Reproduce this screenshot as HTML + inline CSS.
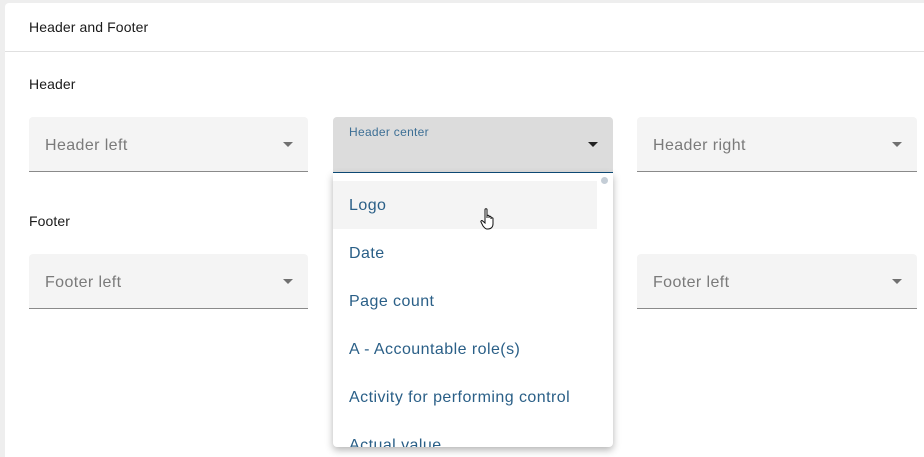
<!DOCTYPE html>
<html style="height:457px;overflow:hidden"><head><style>
body{margin:0;width:924px;height:457px;background:#eeeeee;font-family:"Liberation Sans",sans-serif;overflow:hidden;position:relative}
.card{position:absolute;left:5px;top:3px;width:919px;height:454px;background:#fff;border-radius:4px 0 0 0}
.t{position:absolute;font-size:14px;color:#1a1a1a;letter-spacing:0.1px}
.f{position:absolute;width:279px;height:55px;background:#f4f4f4;border-radius:4px 4px 0 0;border-bottom:1px solid #8a8a8a;box-sizing:border-box}
.f span{position:absolute;left:16px;top:20px;font-size:16px;color:#7a7a7a;letter-spacing:0.4px}
.f i{position:absolute;right:15px;top:25px;width:0;height:0;border-left:5px solid transparent;border-right:5px solid transparent;border-top:5px solid #707070}
.menu{position:absolute;left:333px;top:173px;width:280px;height:274px;background:#fff;box-shadow:0 3px 8px rgba(0,0,0,.3);border-radius:0 0 4px 4px;overflow:hidden}
.it{height:48px;line-height:50px;padding-left:16px;font-size:16px;color:#2a5f87;width:248px;letter-spacing:0.45px}
</style></head><body>
<div class="card"></div>
<div style="position:absolute;left:5px;top:51px;width:919px;height:1px;background:#e0e0e0"></div>
<div class="t" style="left:29px;top:19px">Header and Footer</div>
<div class="t" style="left:29px;top:76px">Header</div>
<div class="t" style="left:29px;top:213px">Footer</div>
<div class="f" style="left:29px;top:117px"><span>Header left</span><i></i></div>
<div class="f" style="left:333px;top:117px;width:280px;height:57px;background:#dcdcdc;border-bottom:2px solid #0d4d7a"><span style="top:8px;font-size:12px;color:#3d6f95;letter-spacing:0.3px">Header center</span><i style="border-top-color:#222"></i></div>
<div class="f" style="left:637px;top:117px;width:280px"><span>Header right</span><i></i></div>
<div class="f" style="left:29px;top:254px"><span>Footer left</span><i></i></div>
<div class="f" style="left:637px;top:254px;width:280px"><span>Footer left</span><i></i></div>
<div class="menu">
<div style="height:8px"></div>
<div class="it" style="background:#f4f4f4">Logo</div>
<div class="it">Date</div>
<div class="it">Page count</div>
<div class="it">A - Accountable role(s)</div>
<div class="it">Activity for performing control</div>
<div class="it">Actual value</div>
<div style="position:absolute;left:268px;top:4px;width:7px;height:7px;border-radius:50%;background:#c4cdd6"></div>
</div>
<svg style="position:absolute;left:480px;top:207px" width="18" height="24" viewBox="0 0 18 24"><path d="M5 2.5c0-1 2-1 2 0V11V9c0-1 2-1 2 0v2-1c0-1 2-1 2 0v2-.5c0-1 2-1 2 0V17c0 3-2 5-5 5H7c-2 0-3-2-4-3L1 15c-.5-1 .7-2 1.7-1L5 16z" fill="#fff" stroke="#111" stroke-width="1"/></svg>
</body></html>
